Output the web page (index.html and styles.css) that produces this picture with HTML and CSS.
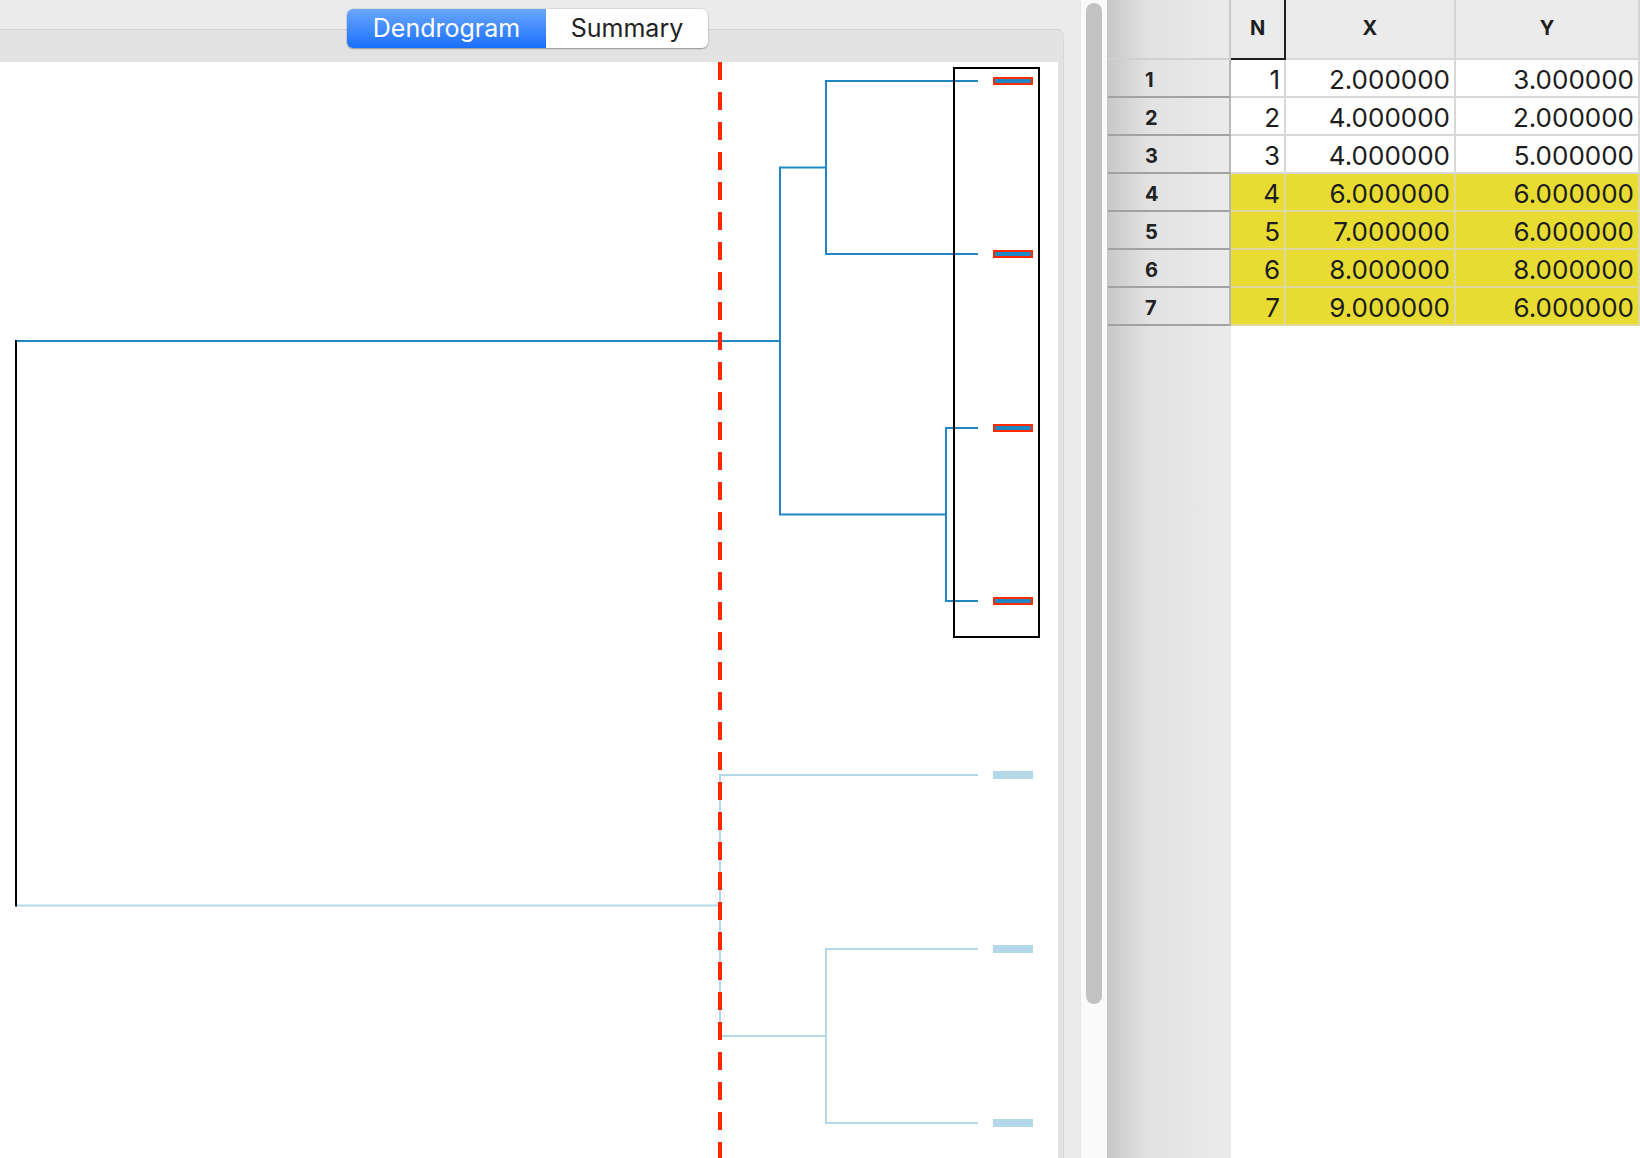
FILE: index.html
```html
<!DOCTYPE html>
<html>
<head>
<meta charset="utf-8">
<link rel="stylesheet" href="styles.css">
</head>
<body>
<div class="left">
  <div class="seg">
    <div class="seg-item on">Dendrogram</div>
    <div class="seg-item off">Summary</div>
  </div>
  <div class="box">
    <div class="plot">
      <svg width="1058" height="1096" viewBox="0 0 1058 1096">
        <g fill="none" stroke-width="2">
          <path stroke="#1f88c4" d="M978 19H826V192H978M826 105.5H780V452.5H946V366H978M946 452.5V539H978M780 279H16"/>
          <path stroke="#b4d7ea" d="M16 843.5H720V713H978M720 843.5V974H826V887H978M826 974V1061H978"/>
          <path stroke="#000" d="M16 278V844.5"/>
        </g>
        <g fill="#1f88c4" stroke="#ff2a00" stroke-width="2">
          <rect x="994" y="16" width="38" height="6"/>
          <rect x="994" y="189" width="38" height="6"/>
          <rect x="994" y="363" width="38" height="6"/>
          <rect x="994" y="536" width="38" height="6"/>
        </g>
        <g fill="#b4d7ea">
          <rect x="993" y="709" width="40" height="8"/>
          <rect x="993" y="883" width="40" height="8"/>
          <rect x="993" y="1057" width="40" height="8"/>
        </g>
        <rect x="954" y="6" width="85" height="569" fill="none" stroke="#000" stroke-width="2"/>
        <path d="M720 0V1096" stroke="#ff2600" stroke-width="4" stroke-dasharray="18 12"/>
      </svg>
    </div>
  </div>
</div>
<div class="vscroll"><div class="thumb"></div></div>
<div class="table-pane">
  <div class="grid">
    <div class="corner"></div>
    <div class="th th-n">N</div>
    <div class="th">X</div>
    <div class="th">Y</div>

    <div class="rh">1</div><div class="td">1</div><div class="td">2.000000</div><div class="td">3.000000</div>
    <div class="rh">2</div><div class="td">2</div><div class="td">4.000000</div><div class="td">2.000000</div>
    <div class="rh">3</div><div class="td">3</div><div class="td">4.000000</div><div class="td">5.000000</div>
    <div class="rh">4</div><div class="td hl">4</div><div class="td hl">6.000000</div><div class="td hl">6.000000</div>
    <div class="rh">5</div><div class="td hl">5</div><div class="td hl">7.000000</div><div class="td hl">6.000000</div>
    <div class="rh">6</div><div class="td hl">6</div><div class="td hl">8.000000</div><div class="td hl">8.000000</div>
    <div class="rh">7</div><div class="td hl">7</div><div class="td hl">9.000000</div><div class="td hl">6.000000</div>
  </div>
</div>
</body>
</html>
```

FILE: styles.css
```css
* { box-sizing: border-box; }

body {
  margin: 0;
  width: 1640px;
  height: 1158px;
  overflow: hidden;
  background: #ececec;
  display: flex;
  font-family: Inter, "Liberation Sans", sans-serif;
}

.left {
  width: 1080px;
  flex: none;
  display: flex;
  flex-direction: column;
  background: #ebebeb;
}

.seg {
  position: relative;
  z-index: 1;
  margin: 9px 0 0 347px;
  width: 361px;
  height: 39px;
  display: flex;
  border-radius: 6px;
  background: #fff;
  overflow: hidden;
  box-shadow: 0 1px 1.5px rgba(0,0,0,.28), 0 0 0 0.5px rgba(0,0,0,.14);
}

.seg-item {
  display: flex;
  align-items: center;
  justify-content: center;
  font-size: 25px;
  padding-bottom: 1px;
}

.seg-item.on {
  width: 199px;
  background: linear-gradient(#6aa7fe, #1a6ffa);
  color: #fff;
}

.seg-item.off {
  flex: 1;
  color: #222;
}

.box {
  margin: -19px 0 0 -10px;
  width: 1074px;
  flex: 1;
  display: flex;
  background: #e2e2e2;
  border-top: 1px solid #d2d2d2;
  border-right: 1px solid #d8d8d8;
  border-top-right-radius: 7px;
  padding: 32px 5px 0 10px;
}

.plot {
  flex: 1;
  background: #fff;
}

.plot svg { display: block; }

.vscroll {
  width: 28px;
  flex: none;
  background: #fafafa;
  border-left: 1px solid #e6e6e6;
  border-right: 1px solid #c4c4c4;
  padding: 3px 0 0 5px;
}

.thumb {
  width: 16px;
  height: 1001px;
  background: #c2c2c2;
  border-radius: 8px;
}

.table-pane {
  width: 532px;
  flex: none;
  background:
    linear-gradient(to right, #c8c8c8, #e2e2e2 40px, #ebebeb 123px) no-repeat 0 0 / 123px 100%,
    #fff;
}

.grid {
  display: grid;
  grid-template-columns: 123px 55px 170px 184px;
  grid-template-rows: 60px repeat(7, 38px);
}

.corner {
  background: linear-gradient(to right, #c8c8c8, #e2e2e2 40px, #ebebeb 123px);
  border-right: 2px solid #c9c9c9;
  border-bottom: 2px solid #d0d0d0;
}

.th {
  background: #ebebeb;
  border-right: 2px solid #d4d4d4;
  border-bottom: 2px solid #d8d8d8;
  display: flex;
  align-items: center;
  justify-content: center;
  padding-bottom: 2px;
  font-weight: 700;
  font-size: 20px;
  color: #1e1e1e;
}

.th-n {
  border-right-color: #1e1e1e;
  border-bottom-color: #1e1e1e;
}

.rh {
  background: linear-gradient(to right, #c8c8c8, #e2e2e2 40px, #ebebeb 123px);
  border-right: 2px solid #b8b8b8;
  border-bottom: 2px solid #a2a2a2;
  display: flex;
  align-items: center;
  padding: 3px 0 0 37px;
  font-weight: 700;
  font-size: 20px;
  color: #222;
}

.td {
  background: #fff;
  border-right: 2px solid #d8d8d8;
  border-bottom: 2px solid #d8d8d8;
  display: flex;
  align-items: center;
  justify-content: flex-end;
  padding: 3px 4px 0 0;
  font-size: 26px;
  color: #1c1c1c;
}

.td.hl {
  background: #e8dc33;
  border-color: #ddd8a0;
}
```
